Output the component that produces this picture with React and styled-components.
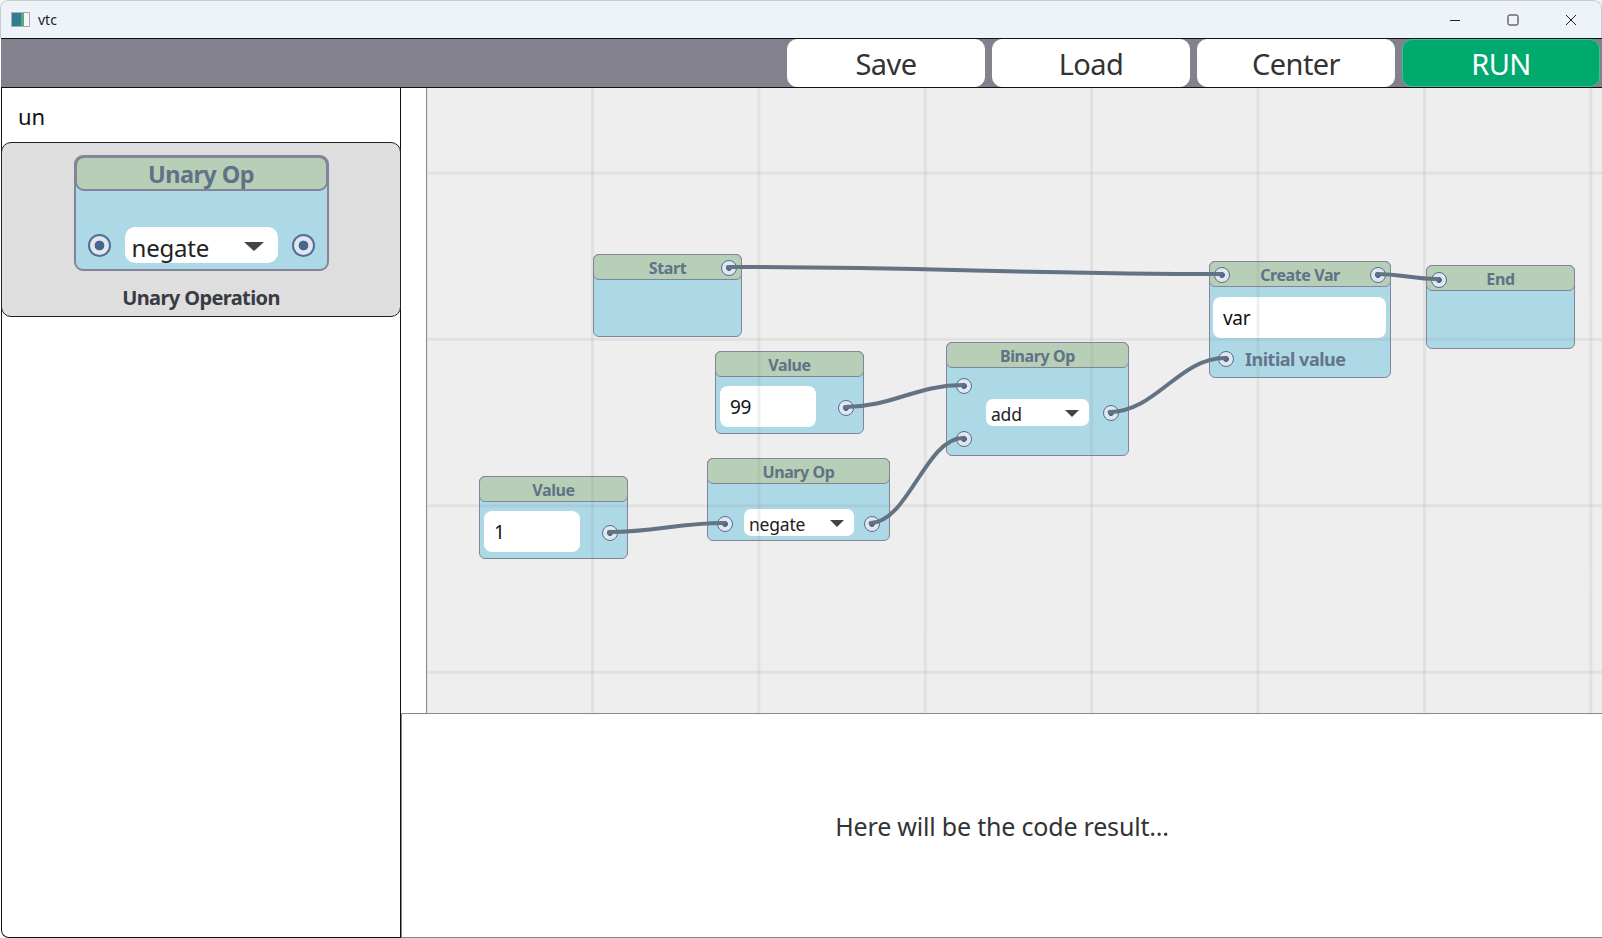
import { createGlobalStyle, styled } from 'styled-components';

const font = '"Noto Sans", "Open Sans", sans-serif';

const Global = createGlobalStyle`
    html, body { margin: 0; padding: 0; background: #f3f3f3; }
    body { font-family: ${font}; overflow: hidden; }
    * { box-sizing: border-box; }
`;

const NODES = [
    { id: 'start', title: 'Start', x: 166, y: 166, w: 149, h: 83, ports: [{ x: 135, y: 13 }] },
    { id: 'v99', title: 'Value', x: 288, y: 263, w: 149, h: 83, input: '99', inputW: 96, inputL: 4, ports: [{ x: 130, y: 56 }] },
    { id: 'v1', title: 'Value', x: 52, y: 388, w: 149, h: 83, input: '1', inputW: 96, inputL: 4, ports: [{ x: 130, y: 56 }] },
    { id: 'unary', title: 'Unary Op', x: 280, y: 370, w: 183, h: 83, select: 'negate', selW: 110, selL: 36, selT: 25, ports: [{ x: 17, y: 65 }, { x: 163.5, y: 65 }] },
    { id: 'binary', title: 'Binary Op', x: 519, y: 254, w: 183, h: 114, select: 'add', selW: 103, selL: 39, selT: 31, ports: [{ x: 17, y: 43 }, { x: 17, y: 96 }, { x: 163.5, y: 70 }] },
    { id: 'create', title: 'Create Var', x: 782, y: 173, w: 182, h: 117, input: 'var', inputW: 173, inputL: 3, inputT: 10, label: 'Initial value', ports: [{ x: 11.5, y: 13 }, { x: 168, y: 13 }, { x: 16, y: 97 }] },
    { id: 'end', title: 'End', x: 999, y: 177, w: 149, h: 84, ports: [{ x: 11.5, y: 14 }] },
];

// port centres in canvas coordinates, [from, to]
const WIRES = [
    [[301, 179], [793.5, 186]],
    [[950, 186], [1010.5, 191]],
    [[418, 319], [536, 297]],
    [[182, 444], [297, 435]],
    [[443.5, 435], [536, 350]],
    [[682.5, 324], [798, 270]],
];

const wirePath = ([[x1, y1], [x2, y2]]) => {
    const dx = (x2 - x1) * 0.4;
    return `M${x1} ${y1} C${x1 + dx} ${y1}, ${x2 - dx} ${y2}, ${x2} ${y2}`;
};

const Window = styled.div`
    width: 1602px;
    height: 938px;
    display: flex;
    flex-direction: column;
    background: #fff;
    border-radius: 8px 8px 0 0;
    overflow: hidden;
`;

const TitleBar = styled.div`
    height: 38px;
    flex: none;
    display: flex;
    align-items: center;
    padding: 0 1px 0 10px;
    background: #eef3f9;
    border: 1px solid #c9cbce;
    border-bottom: 0;
    border-radius: 8px 8px 0 0;
`;

const AppIcon = styled.div`
    width: 19px;
    height: 15px;
    border: 1px solid #aab;
    background: linear-gradient(90deg, #2f7f92 0 9px, #5aa87e 9px 12px, #f4f6f8 12px);
    margin-right: 8px;
`;

const AppName = styled.span`
    font-size: 14px;
    color: #222;
    flex: 1;
`;

const Control = styled.div`
    width: 58px;
    height: 37px;
    display: flex;
    align-items: center;
    justify-content: center;
    color: #222;
`;

const Toolbar = styled.div`
    height: 50px;
    flex: none;
    margin-left: 1px;
    display: flex;
    justify-content: flex-end;
    gap: 7px;
    padding-right: 2px;
    background: #83818e;
    border-top: 1px solid #111;
    border-bottom: 1px solid #111;
`;

const ToolButton = styled.div`
    width: 198px;
    display: flex;
    align-items: center;
    justify-content: center;
    border-radius: 10px;
    border: 1px solid ${p => (p.$run ? '#3fbf92' : '#fff')};
    font-size: 29px;
    letter-spacing: -0.6px;
    color: ${p => (p.$run ? '#fff' : '#333')};
    background: ${p => (p.$run ? '#00a96e' : '#fff')};
`;

const Body = styled.div`
    flex: 1;
    min-height: 0;
    display: flex;
`;

const Sidebar = styled.div`
    width: 400px;
    flex: none;
    margin-left: 1px;
    border-left: 1px solid #111;
    border-right: 1px solid #111;
    border-bottom: 1px solid #111;
    border-bottom-left-radius: 8px;
    background: #fff;
`;

const Search = styled.div`
    height: 54px;
    padding: 2px 0 0 16px;
    display: flex;
    align-items: center;
    font-size: 22px;
    color: #111;
`;

const Card = styled.div`
    height: 175px;
    margin: 0 -1px;
    padding-top: 12px;
    display: flex;
    flex-direction: column;
    align-items: center;
    background: #dedede;
    border: 1px solid #222;
    border-radius: 10px;
`;

const PaletteNode = styled.div`
    width: 255px;
    height: 116px;
    background: #add8e6;
    border: 2px solid #83839a;
    border-radius: 9px;
    display: flex;
    flex-direction: column;
`;

const PaletteHeader = styled.div`
    height: 35px;
    margin: -1px -1px 0;
    display: flex;
    align-items: center;
    justify-content: center;
    background: #b6cfb6;
    border: 2px solid #83839a;
    border-radius: 9px;
    font-size: 23.5px;
    font-weight: 700;
    letter-spacing: -0.6px;
    color: #607286;
`;

const PaletteRow = styled.div`
    flex: 1;
    display: flex;
    align-items: flex-end;
    justify-content: space-between;
    padding: 0 12px 6px;
`;

const PalettePort = styled.div`
    margin-bottom: 6px;
`;

const Caption = styled.div`
    margin-top: 13px;
    font-size: 20px;
    font-weight: 700;
    letter-spacing: -0.6px;
    color: #3a3a44;
`;

const Main = styled.div`
    flex: 1;
    min-width: 0;
    display: flex;
    flex-direction: column;
`;

const EditorRow = styled.div`
    height: 625px;
    flex: none;
    padding-left: 25px;
    background: #fff;
`;

const Canvas = styled.div`
    position: relative;
    height: 100%;
    overflow: hidden;
    background: #eeeeee;
    border-left: 1px solid #888;
`;

const GridLines = styled.div`
    position: absolute;
    inset: 0;
    pointer-events: none;
    background-image:
        linear-gradient(to right, rgba(120, 120, 120, 0.11) 3px, transparent 3px),
        linear-gradient(to bottom, rgba(120, 120, 120, 0.11) 3px, transparent 3px);
    background-size: 166.4px 166.4px;
    background-position: 164px 83.5px;
`;

const Wires = styled.svg`
    position: absolute;
    inset: 0;
    width: 100%;
    height: 100%;
    pointer-events: none;
    path {
        fill: none;
        stroke: #637383;
        stroke-width: 4;
        stroke-linecap: round;
    }
`;

const NodeBox = styled.div`
    position: absolute;
    left: ${p => p.$x}px;
    top: ${p => p.$y}px;
    width: ${p => p.$w}px;
    height: ${p => p.$h}px;
    background: #add8e6;
    border: 1.5px solid #83839a;
    border-radius: 6px;
    display: flex;
    flex-direction: column;
`;

const NodeHeader = styled.div`
    height: 26px;
    flex: none;
    margin: -1px -1px 0;
    padding-top: 2px;
    display: flex;
    align-items: center;
    justify-content: center;
    background: #b6cfb6;
    border: 1.5px solid #83839a;
    border-radius: 6px;
    font-size: 16px;
    font-weight: 700;
    letter-spacing: -0.4px;
    color: #607286;
`;

const NodeInput = styled.div`
    width: ${p => p.$w}px;
    height: 41px;
    margin: ${p => p.$t || 9}px 0 0 ${p => p.$l}px;
    padding: 1px 0 0 10px;
    display: flex;
    align-items: center;
    background: #fff;
    border-radius: 8px;
    font-size: 19px;
    letter-spacing: -0.3px;
    color: #111;
`;

const Select = styled.div`
    width: ${p => p.$w}px;
    height: ${p => p.$h}px;
    flex: none;
    margin: ${p => p.$t || 0}px 0 0 ${p => p.$l || 0}px;
    padding: ${p => p.$top}px ${p => p.$right}px 0 ${p => p.$left}px;
    display: flex;
    align-items: center;
    justify-content: space-between;
    background: #fff;
    border-radius: ${p => p.$r}px;
    font-size: ${p => p.$size}px;
    letter-spacing: -0.2px;
    color: #222;
`;

const Caret = styled.span`
    width: 0;
    height: 0;
    margin-bottom: 2px;
    border-left: ${p => (p.$big ? 10 : 7)}px solid transparent;
    border-right: ${p => (p.$big ? 10 : 7)}px solid transparent;
    border-top: ${p => (p.$big ? 9 : 7)}px solid #444;
`;

const NodeLabel = styled.div`
    margin: 9px 0 0 35px;
    font-size: 18px;
    font-weight: 700;
    letter-spacing: -0.5px;
    color: #647589;
`;

const PortDot = styled.span`
    display: block;
    width: ${p => (p.$big ? 23 : 16)}px;
    height: ${p => (p.$big ? 23 : 16)}px;
    flex: none;
    border-radius: 50%;
    background: radial-gradient(circle, #46688f 0 ${p => (p.$big ? 4.6 : 2.6)}px, #e4e6ee ${p => (p.$big ? 5.2 : 3.2)}px);
    border: ${p => (p.$big ? 2 : 1.5)}px solid #4f6f95;
`;

const NodePort = styled(PortDot)`
    position: absolute;
    left: ${p => p.$x - 8}px;
    top: ${p => p.$y - 8}px;
`;

const Output = styled.div`
    flex: 1;
    display: flex;
    align-items: center;
    justify-content: center;
    border-top: 1px solid #888;
    border-left: 1px solid #888;
    border-bottom: 1px solid #888;
    font-size: 25px;
    letter-spacing: -0.2px;
    color: #333;
`;

const GraphNode = ({ n }) => (
    <NodeBox $x={n.x} $y={n.y} $w={n.w} $h={n.h}>
        <NodeHeader>{n.title}</NodeHeader>
        {n.input && <NodeInput $w={n.inputW} $l={n.inputL} $t={n.inputT}>{n.input}</NodeInput>}
        {n.select && (
            <Select $w={n.selW} $h={27} $l={n.selL} $t={n.selT} $top={3} $left={5} $right={10} $r={7} $size={17.5}>
                {n.select}
                <Caret />
            </Select>
        )}
        {n.label && <NodeLabel>{n.label}</NodeLabel>}
        {n.ports.map((p, idx) => (
            <NodePort key={idx} $x={p.x} $y={p.y} />
        ))}
    </NodeBox>
);

const App = () => (
    <>
        <Global />
        <Window>
            <TitleBar>
                <AppIcon />
                <AppName>vtc</AppName>
                <Control>
                    <svg width="12" height="12" viewBox="0 0 12 12"><path d="M1 6.5h10" stroke="currentColor" /></svg>
                </Control>
                <Control>
                    <svg width="12" height="12" viewBox="0 0 12 12"><rect x="1" y="1" width="10" height="10" rx="1.5" fill="none" stroke="currentColor" /></svg>
                </Control>
                <Control>
                    <svg width="12" height="12" viewBox="0 0 12 12"><path d="M1 1l10 10M11 1L1 11" stroke="currentColor" /></svg>
                </Control>
            </TitleBar>
            <Toolbar>
                <ToolButton>Save</ToolButton>
                <ToolButton>Load</ToolButton>
                <ToolButton>Center</ToolButton>
                <ToolButton $run>RUN</ToolButton>
            </Toolbar>
            <Body>
                <Sidebar>
                    <Search>un</Search>
                    <Card>
                        <PaletteNode>
                            <PaletteHeader>Unary Op</PaletteHeader>
                            <PaletteRow>
                                <PalettePort><PortDot $big /></PalettePort>
                                <Select $w={153} $h={36} $top={4} $left={7} $right={14} $r={10} $size={24}>
                                    negate
                                    <Caret $big />
                                </Select>
                                <PalettePort><PortDot $big /></PalettePort>
                            </PaletteRow>
                        </PaletteNode>
                        <Caption>Unary Operation</Caption>
                    </Card>
                </Sidebar>
                <Main>
                    <EditorRow>
                        <Canvas>
                            {NODES.map(n => (
                                <GraphNode key={n.id} n={n} />
                            ))}
                            <GridLines />
                            <Wires>
                                {WIRES.map((w, idx) => (
                                    <path key={idx} d={wirePath(w)} />
                                ))}
                            </Wires>
                        </Canvas>
                    </EditorRow>
                    <Output>Here will be the code result...</Output>
                </Main>
            </Body>
        </Window>
    </>
);

export default App;
